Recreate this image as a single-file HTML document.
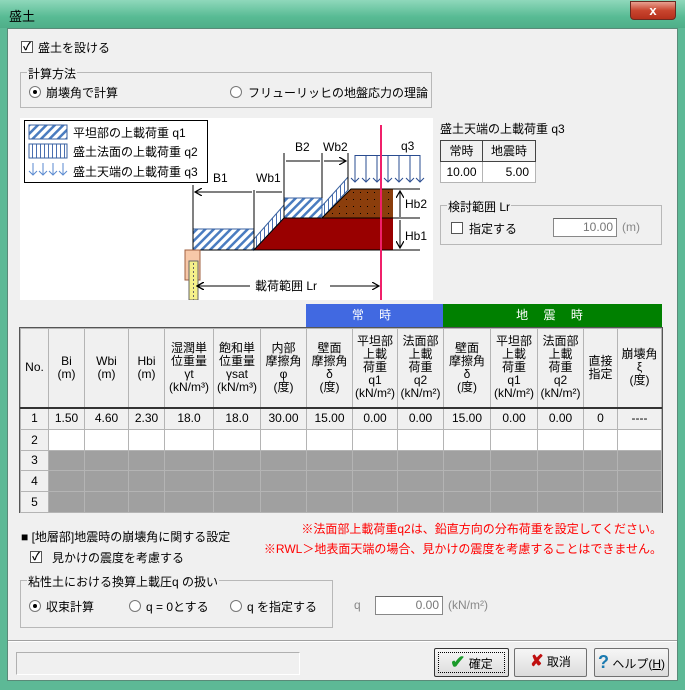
<!DOCTYPE html>
<html><head><meta charset="utf-8"><style>
*{box-sizing:border-box;margin:0;padding:0}
body{width:685px;height:690px;overflow:hidden;font-family:"Liberation Sans","Noto Sans CJK JP",sans-serif;font-size:12px;color:#000;background:#5db996;position:relative}
.a{position:absolute;white-space:nowrap}
.title{left:0;top:0;width:685px;height:28px;background:linear-gradient(180deg,#8fd8bb,#58bb94 60%,#4fae89);}
.client{left:7px;top:28px;width:671px;height:653px;background:#f0f0f0;border:1px solid #5a8a78}
.cb{width:12px;height:12px;border:1px solid #555;background:#fff;font-size:11px;line-height:10px;text-align:center;font-weight:bold}
.rb{width:12px;height:12px;border:1px solid #777;border-radius:50%;background:#fff}
.rb.on::after{content:"";position:absolute;left:3px;top:3px;width:4px;height:4px;border-radius:50%;background:#000}
.grp{border:1px solid #b8b8b8;}
.grp>span{position:absolute;left:6px;top:-8px;background:#f0f0f0;padding:0 1px}
.inp{background:#fff;border:1px solid #888;border-top-color:#666;text-align:right;padding-right:3px;color:#777;line-height:17px}
table{border-collapse:collapse;position:absolute}
td{border:1px solid #b4b4b4;text-align:center;font-size:12px;line-height:13px;padding:0}
.btn{border:1px solid #707070;background:linear-gradient(#f6f6f6,#dcdcdc);border-radius:2px;text-align:center;line-height:26px;height:29px}
</style></head><body>
<div class="a title"></div>
<div class="a" style="left:9px;top:6px;font-size:13px">盛土</div>
<div class="a" style="left:630px;top:1px;width:46px;height:19px;border:1px solid #6b2a20;border-radius:0 0 4px 4px;background:linear-gradient(#e8a090,#c8452e 50%,#b5301c);color:#fff;font-weight:bold;text-align:center;line-height:17px;font-size:13px">x</div>
<div class="a client"></div>

<div class="a cb" style="left:21px;top:41px">✓</div>
<div class="a" style="left:38px;top:39px">盛土を設ける</div>

<div class="a grp" style="left:20px;top:72px;width:412px;height:36px"><span>計算方法</span></div>
<div class="a rb on" style="left:29px;top:86px"></div>
<div class="a" style="left:46px;top:84px">崩壊角で計算</div>
<div class="a rb" style="left:230px;top:86px"></div>
<div class="a" style="left:248px;top:84px">フリューリッヒの地盤応力の理論</div>

<svg class="a" style="left:20px;top:118px" width="413" height="182" viewBox="20 118 413 182">
<defs>
<pattern id="h" width="6" height="6" patternUnits="userSpaceOnUse" patternTransform="rotate(45)"><rect width="6" height="6" fill="#fff"/><rect width="2.5" height="6" fill="#4a7cc0"/></pattern>
<pattern id="v" width="4" height="4" patternUnits="userSpaceOnUse"><rect width="4" height="4" fill="#fff"/><rect width="1" height="4" fill="#4a6fb0"/></pattern>
<pattern id="d" width="7" height="7" patternUnits="userSpaceOnUse"><rect width="7" height="7" fill="#8b3e0c"/><rect x="3" y="3" width="1" height="1" fill="#000"/></pattern>
<marker id="ar" markerWidth="8" markerHeight="8" refX="7" refY="4" orient="auto-start-reverse"><path d="M0,0L7,4L0,8" fill="none" stroke="#000" stroke-width="1.2"/></marker>
</defs>
<rect x="20" y="118" width="413" height="182" fill="#fff"/>
<rect x="24.5" y="120.5" width="183" height="62" fill="#fff" stroke="#000"/>
<rect x="29" y="125" width="38" height="14" fill="url(#h)" stroke="#3a62a0"/>
<rect x="29" y="144" width="38" height="14" fill="url(#v)" stroke="#3a62a0"/>
<g stroke="#5a8ad0" fill="none"><path d="M33,163v12M29,171l4,4l4-4M43,163v12M39,171l4,4l4-4M53,163v12M49,171l4,4l4-4M63,163v12M59,171l4,4l4-4"/></g>
<text x="73" y="137" font-size="12">平坦部の上載荷重  q1</text>
<text x="73" y="156" font-size="12">盛土法面の上載荷重 q2</text>
<text x="73" y="176" font-size="12">盛土天端の上載荷重 q3</text>
<rect x="193" y="229" width="61" height="21" fill="url(#h)" stroke="#3a62a0"/>
<polygon points="254,250 284,218 393,218 393,250" fill="#990000"/>
<polygon points="254,250 254,239 284,205 284,218" fill="url(#v)" stroke="#3a62a0"/>
<rect x="284" y="198" width="38" height="20" fill="url(#h)" stroke="#3a62a0"/>
<polygon points="322,218 351,189 393,189 393,218" fill="url(#d)"/>
<polygon points="322,218 322,206 348,177 348,190" fill="url(#v)" stroke="#3a62a0"/>
<path d="M322,218L351,189H420M284,218H420M254,250L284,218M185,250H420" stroke="#000" fill="none"/>
<path d="M193,185V250M254,190V250M284,153V218M322,153V198M348,153V190" stroke="#000"/>
<path d="M195,192H252M256,192H282M286,161H320M324,161H346" stroke="#000" marker-start="url(#ar)" marker-end="url(#ar)"/>
<text x="213" y="182" font-size="12">B1</text><text x="256" y="182" font-size="12">Wb1</text>
<text x="295" y="151" font-size="12">B2</text><text x="323" y="151" font-size="12">Wb2</text>
<text x="401" y="150" font-size="12">q3</text>
<path d="M355,155.5H420" stroke="#2a4c90"/>
<g stroke="#2a4c90" fill="none"><path d="M355,155v27M351,178l4,4l4-4M366,155v27M362,178l4,4l4-4M377,155v27M373,178l4,4l4-4M388,155v27M384,178l4,4l4-4M399,155v27M395,178l4,4l4-4M410,155v27M406,178l4,4l4-4M420,155v27M416,178l4,4l4-4"/></g>
<path d="M400,191V217M400,220V248" stroke="#000" marker-start="url(#ar)" marker-end="url(#ar)"/>
<text x="405" y="208" font-size="12">Hb2</text><text x="405" y="240" font-size="12">Hb1</text>
<rect x="185" y="250" width="15" height="30" fill="#f7c8a8" stroke="#a06040"/>
<rect x="189" y="261" width="9" height="39" fill="#f5f08a" stroke="#666"/>
<path d="M193.5,263V300" stroke="#666" stroke-dasharray="2,2"/>
<path d="M197,286H250M330,286H379" stroke="#000" marker-start="url(#ar)" marker-end="url(#ar)"/>
<path d="M197,286H250" stroke="#000" marker-start="url(#ar)"/>
<text x="255" y="290" font-size="12">載荷範囲 Lr</text>
<path d="M381,125V300" stroke="#f0206a" stroke-width="2"/>
</svg>

<div class="a" style="left:440px;top:120px">盛土天端の上載荷重 q3</div>
<table style="left:440px;top:140px;width:96px">
<tr><td style="height:21px;width:42px;background:#f0f0f0;border-color:#444">常時</td><td style="background:#f0f0f0;border-color:#444">地震時</td></tr>
<tr><td style="height:21px;background:#fff">10.00</td><td style="background:#fff;text-align:right;padding-right:6px">5.00</td></tr>
</table>
<div class="a grp" style="left:440px;top:205px;width:222px;height:40px"><span>検討範囲 Lr</span></div>
<div class="a cb" style="left:451px;top:222px"></div>
<div class="a" style="left:469px;top:220px">指定する</div>
<div class="a inp" style="left:553px;top:218px;width:64px;height:19px">10.00</div>
<div class="a" style="left:622px;top:220px;color:#888">(m)</div>

<div class="a" style="left:306px;top:304px;width:137px;height:23px;background:#4169e1;color:#fff;text-align:center;line-height:23px;letter-spacing:6px">常 時</div>
<div class="a" style="left:443px;top:304px;width:219px;height:23px;background:#008000;color:#fff;text-align:center;line-height:23px;letter-spacing:6px">地 震 時</div>
<div class="a" style="left:19px;top:327px;width:644px;height:186px;border:1px solid #555;background:#a0a0a0"></div>
<table style="left:20px;top:328px;width:642px">
<tr style="background:#f0f0f0;height:79px">
<td style="width:28px">No.</td><td style="width:36px">Bi<br>(m)</td><td style="width:44px">Wbi<br>(m)</td><td style="width:36px">Hbi<br>(m)</td>
<td style="width:49px">湿潤単<br>位重量<br>γt<br>(kN/m³)</td><td style="width:47px">飽和単<br>位重量<br>γsat<br>(kN/m³)</td>
<td style="width:46px">内部<br>摩擦角<br>φ<br>(度)</td><td style="width:46px">壁面<br>摩擦角<br>δ<br>(度)</td>
<td style="width:45px">平坦部<br>上載<br>荷重<br>q1<br>(kN/m²)</td><td style="width:46px">法面部<br>上載<br>荷重<br>q2<br>(kN/m²)</td>
<td style="width:47px">壁面<br>摩擦角<br>δ<br>(度)</td><td style="width:47px">平坦部<br>上載<br>荷重<br>q1<br>(kN/m²)</td><td style="width:46px">法面部<br>上載<br>荷重<br>q2<br>(kN/m²)</td>
<td style="width:34px">直接<br>指定</td><td>崩壊角<br>ξ<br>(度)</td></tr>
<tr style="height:22px;background:#f0f0f0;border-top:2px solid #333"><td>1</td><td>1.50</td><td>4.60</td><td>2.30</td><td>18.0</td><td>18.0</td><td>30.00</td><td>15.00</td><td>0.00</td><td>0.00</td><td>15.00</td><td>0.00</td><td>0.00</td><td>0</td><td>----</td></tr>
<tr style="height:21px;background:#fff"><td style="background:#f0f0f0">2</td><td></td><td></td><td></td><td></td><td></td><td></td><td></td><td></td><td></td><td></td><td></td><td></td><td></td><td></td></tr>
<tr style="height:20px;background:#a0a0a0"><td style="background:#f0f0f0">3</td><td></td><td></td><td></td><td></td><td></td><td></td><td></td><td></td><td></td><td></td><td></td><td></td><td></td><td></td></tr>
<tr style="height:21px;background:#a0a0a0"><td style="background:#f0f0f0">4</td><td></td><td></td><td></td><td></td><td></td><td></td><td></td><td></td><td></td><td></td><td></td><td></td><td></td><td></td></tr>
<tr style="height:21px;background:#a0a0a0"><td style="background:#f0f0f0">5</td><td></td><td></td><td></td><td></td><td></td><td></td><td></td><td></td><td></td><td></td><td></td><td></td><td></td><td></td></tr>
</table>

<div class="a" style="left:21px;top:528px">■ [地層部]地震時の崩壊角に関する設定</div>
<div class="a" style="right:23px;top:520px;color:#f00;text-align:right">※法面部上載荷重q2は、鉛直方向の分布荷重を設定してください。</div>
<div class="a" style="right:23px;top:540px;color:#f00;text-align:right">※RWL＞地表面天端の場合、見かけの震度を考慮することはできません。</div>
<div class="a cb" style="left:30px;top:551px">✓</div>
<div class="a" style="left:52px;top:549px">見かけの震度を考慮する</div>
<div class="a grp" style="left:20px;top:580px;width:313px;height:48px"><span>粘性土における換算上載圧q の扱い</span></div>
<div class="a rb on" style="left:29px;top:600px"></div>
<div class="a" style="left:46px;top:598px">収束計算</div>
<div class="a rb" style="left:129px;top:600px"></div>
<div class="a" style="left:146px;top:598px">q = 0とする</div>
<div class="a rb" style="left:230px;top:600px"></div>
<div class="a" style="left:247px;top:598px">q を指定する</div>
<div class="a" style="left:354px;top:598px;color:#888">q</div>
<div class="a inp" style="left:375px;top:596px;width:68px;height:19px">0.00</div>
<div class="a" style="left:448px;top:598px;color:#888">(kN/m²)</div>

<div class="a" style="left:8px;top:640px;width:669px;border-top:1px solid #a0a0a0;border-bottom:1px solid #fff"></div>
<div class="a" style="left:16px;top:652px;width:284px;height:23px;border:1px solid #b0b0b0;border-right-color:#fff;border-bottom-color:#fff"></div>
<div class="a btn" style="left:434px;top:648px;width:75px;border:1px solid #333"><div style="position:absolute;left:3px;top:3px;right:3px;bottom:3px;border:1px dotted #000"></div><span style="color:#1a9a2a;font-size:18px;font-weight:bold">✔</span> 確定</div>
<div class="a btn" style="left:514px;top:648px;width:73px"><span style="color:#c01010;font-size:16px;font-weight:bold">✘</span> 取消</div>
<div class="a btn" style="left:594px;top:648px;width:75px"><span style="color:#1a7ab0;font-size:18px;font-weight:bold">?</span> ヘルプ(<u>H</u>)</div>
</body></html>
